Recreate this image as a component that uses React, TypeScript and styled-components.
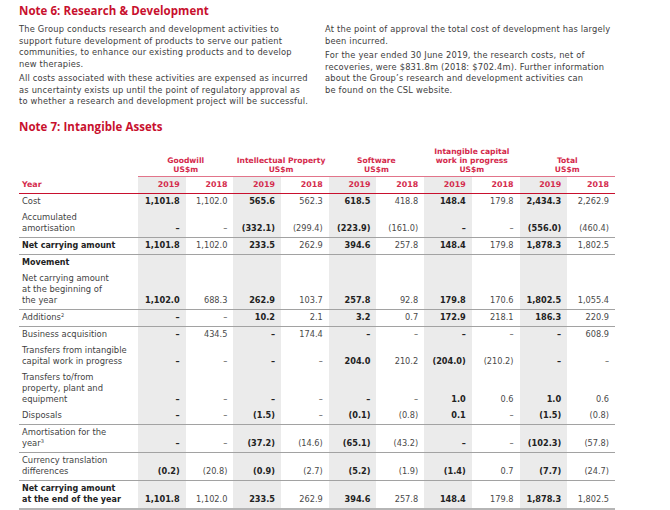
import React from "react";
import styled, { createGlobalStyle } from "styled-components";

const GlobalStyle = createGlobalStyle`
  html, body { margin: 0; padding: 0; background: #ffffff; }
  body {
    font-family: "DejaVu Sans", "Open Sans", sans-serif;
    color: #3b3b3b;
    -webkit-font-smoothing: antialiased;
  }
`;

const RED = "#c8102e";

const Page = styled.div`
  width: 670px;
  box-sizing: border-box;
  padding: 4px 19px 0;
`;

const NoteTitle = styled.h2<{ $gap?: number }>`
  margin: ${(p) => p.$gap ?? 0}px 0 0;
  font-family: "Open Sans", "DejaVu Sans", sans-serif;
  font-size: 11.5px;
  line-height: 14px;
  font-weight: 700;
  color: ${RED};
  letter-spacing: 0.05px;
`;

const Columns = styled.div`
  display: grid;
  grid-template-columns: 306px 1fr;
  margin-top: 6px;
`;

const Para = styled.p`
  margin: 0 0 3px;
  font-size: 8.3px;
  letter-spacing: 0.2px;
  line-height: 11.5px;
  white-space: nowrap;
  color: #3d3d3d;
`;

const Table = styled.table`
  margin-top: 13px;
  width: 596px;
  border-collapse: collapse;
  table-layout: fixed;
  font-size: 8.2px;
`;

const GroupHead = styled.th`
  padding: 0 0 2px;
  font-size: 7.6px;
  font-weight: 700;
  color: #d42a4c;
  text-align: center;
  vertical-align: bottom;
  line-height: 9px;
  border-bottom: 1px solid #e2748a;
`;

const BlankHead = styled.th`
  padding: 0;
`;

const YearLabel = styled.th`
  text-align: left;
  padding: 2.5px 0 2.5px 3px;
  line-height: 11px;
  font-size: 7.9px;
  font-weight: 700;
  color: #d42a4c;
  border-bottom: 1.5px solid ${RED};
`;

const YearCell = styled.th<{ $shade: boolean }>`
  text-align: right;
  padding: 2.5px 6px 2.5px 0;
  line-height: 11px;
  font-size: 7.9px;
  font-weight: 700;
  color: #d42a4c;
  background: ${(p) => (p.$shade ? "#ebebeb" : "transparent")};
  border-bottom: 1.5px solid ${RED};
`;

type Rule = "none" | "thin" | "thick";

const ruleCss = (r: Rule) =>
  r === "thin" ? "1px solid #a2a2a2" : r === "thick" ? "2.5px solid #b5b5b5" : "none";

const Label = styled.td<{ $bold: boolean; $rule: Rule }>`
  padding: 2.5px 0 2.5px 3px;
  line-height: 11px;
  text-align: left;
  vertical-align: bottom;
  white-space: nowrap;
  font-size: ${(p) => (p.$bold ? "8px" : "8.4px")};
  font-weight: ${(p) => (p.$bold ? 700 : 400)};
  color: ${(p) => (p.$bold ? "#222222" : "#3f3f3f")};
  border-bottom: ${(p) => ruleCss(p.$rule)};
`;

const Num = styled.td<{ $current: boolean; $rule: Rule }>`
  padding: 2.5px 6px 2.5px 0;
  line-height: 11px;
  text-align: right;
  vertical-align: bottom;
  white-space: nowrap;
  font-weight: ${(p) => (p.$current ? 700 : 400)};
  color: ${(p) => (p.$current ? "#222222" : "#4a4a4a")};
  background: ${(p) => (p.$current ? "#ebebeb" : "transparent")};
  border-bottom: ${(p) => ruleCss(p.$rule)};
`;

const Sup = styled.sup`
  font-size: 5px;
  line-height: 0;
  vertical-align: 3px;
`;

const groups: string[][] = [
  ["Goodwill", "US$m"],
  ["Intellectual Property", "US$m"],
  ["Software", "US$m"],
  ["Intangible capital", "work in progress", "US$m"],
  ["Total", "US$m"],
];

type Row = {
  label: React.ReactNode[];
  bold?: boolean;
  rule: Rule;
  vals: string[];
};

const rows: Row[] = [
  {
    label: ["Cost"],
    rule: "none",
    vals: ["1,101.8", "1,102.0", "565.6", "562.3", "618.5", "418.8", "148.4", "179.8", "2,434.3", "2,262.9"],
  },
  {
    label: ["Accumulated", "amortisation"],
    rule: "thin",
    vals: ["–", "–", "(332.1)", "(299.4)", "(223.9)", "(161.0)", "–", "–", "(556.0)", "(460.4)"],
  },
  {
    label: ["Net carrying amount"],
    bold: true,
    rule: "thin",
    vals: ["1,101.8", "1,102.0", "233.5", "262.9", "394.6", "257.8", "148.4", "179.8", "1,878.3", "1,802.5"],
  },
  {
    label: ["Movement"],
    bold: true,
    rule: "none",
    vals: ["", "", "", "", "", "", "", "", "", ""],
  },
  {
    label: ["Net carrying amount", "at the beginning of", "the year"],
    rule: "thin",
    vals: ["1,102.0", "688.3", "262.9", "103.7", "257.8", "92.8", "179.8", "170.6", "1,802.5", "1,055.4"],
  },
  {
    label: [
      <>
        Additions<Sup>2</Sup>
      </>,
    ],
    rule: "thin",
    vals: ["–", "–", "10.2", "2.1", "3.2", "0.7", "172.9", "218.1", "186.3", "220.9"],
  },
  {
    label: ["Business acquisition"],
    rule: "none",
    vals: ["–", "434.5", "–", "174.4", "–", "–", "–", "–", "–", "608.9"],
  },
  {
    label: ["Transfers from intangible", "capital work in progress"],
    rule: "none",
    vals: ["–", "–", "–", "–", "204.0", "210.2", "(204.0)", "(210.2)", "–", "–"],
  },
  {
    label: ["Transfers to/from", "property, plant and", "equipment"],
    rule: "none",
    vals: ["–", "–", "–", "–", "–", "–", "1.0", "0.6", "1.0", "0.6"],
  },
  {
    label: ["Disposals"],
    rule: "thin",
    vals: ["–", "–", "(1.5)", "–", "(0.1)", "(0.8)", "0.1", "–", "(1.5)", "(0.8)"],
  },
  {
    label: [
      "Amortisation for the",
      <>
        year<Sup>3</Sup>
      </>,
    ],
    rule: "thin",
    vals: ["–", "–", "(37.2)", "(14.6)", "(65.1)", "(43.2)", "–", "–", "(102.3)", "(57.8)"],
  },
  {
    label: ["Currency translation", "differences"],
    rule: "thin",
    vals: ["(0.2)", "(20.8)", "(0.9)", "(2.7)", "(5.2)", "(1.9)", "(1.4)", "0.7", "(7.7)", "(24.7)"],
  },
  {
    label: ["Net carrying amount", "at the end of the year"],
    bold: true,
    rule: "thick",
    vals: ["1,101.8", "1,102.0", "233.5", "262.9", "394.6", "257.8", "148.4", "179.8", "1,878.3", "1,802.5"],
  },
];

const years = ["2019", "2018", "2019", "2018", "2019", "2018", "2019", "2018", "2019", "2018"];

const withBreaks = (parts: React.ReactNode[]) =>
  parts.map((p, i) => (
    <React.Fragment key={i}>
      {i > 0 && <br />}
      {p}
    </React.Fragment>
  ));

export default function App() {
  return (
    <>
      <GlobalStyle />
      <Page>
        <NoteTitle>Note 6: Research &amp; Development</NoteTitle>
        <Columns>
          <div>
            <Para>
              {withBreaks([
                "The Group conducts research and development activities to",
                "support future development of products to serve our patient",
                "communities, to enhance our existing products and to develop",
                "new therapies.",
              ])}
            </Para>
            <Para>
              {withBreaks([
                "All costs associated with these activities are expensed as incurred",
                "as uncertainty exists up until the point of regulatory approval as",
                "to whether a research and development project will be successful.",
              ])}
            </Para>
          </div>
          <div>
            <Para>
              {withBreaks([
                "At the point of approval the total cost of development has largely",
                "been incurred.",
              ])}
            </Para>
            <Para>
              {withBreaks([
                "For the year ended 30 June 2019, the research costs, net of",
                "recoveries, were $831.8m (2018: $702.4m). Further information",
                "about the Group’s research and development activities can",
                "be found on the CSL website.",
              ])}
            </Para>
          </div>
        </Columns>
        <NoteTitle $gap={9}>Note 7: Intangible Assets</NoteTitle>
        <Table>
          <colgroup>
            <col style={{ width: 119 }} />
            {years.map((_, i) => (
              <col key={i} />
            ))}
          </colgroup>
          <thead>
            <tr>
              <BlankHead />
              {groups.map((g, i) => (
                <GroupHead key={i} colSpan={2}>
                  {withBreaks(g)}
                </GroupHead>
              ))}
            </tr>
            <tr>
              <YearLabel>Year</YearLabel>
              {years.map((y, i) => (
                <YearCell key={i} $shade={i % 2 === 0}>
                  {y}
                </YearCell>
              ))}
            </tr>
          </thead>
          <tbody>
            {rows.map((r, ri) => (
              <tr key={ri}>
                <Label $bold={!!r.bold} $rule={r.rule}>
                  {withBreaks(r.label)}
                </Label>
                {r.vals.map((v, vi) => (
                  <Num key={vi} $current={vi % 2 === 0} $rule={r.rule}>
                    {v}
                  </Num>
                ))}
              </tr>
            ))}
          </tbody>
        </Table>
      </Page>
    </>
  );
}
